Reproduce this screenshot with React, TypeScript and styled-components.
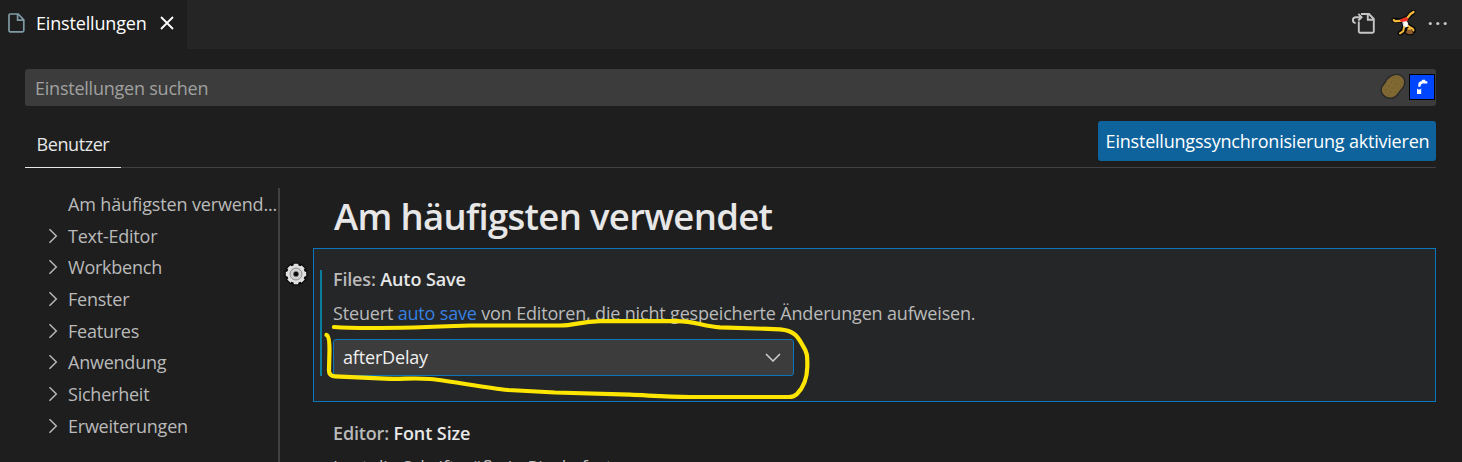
import React from "react";
import styled, { createGlobalStyle } from "styled-components";

const Global = createGlobalStyle`
  * { box-sizing: border-box; }
  body {
    margin: 0;
    overflow: hidden;
    background: #1e1e1e;
    color: #bababa;
    font: 400 18px/24px "Open Sans", "Noto Sans", sans-serif;
    letter-spacing: -0.17px;
    white-space: nowrap;
  }
`;

const Window = styled.div`
  position: relative;
  width: 1462px;
  height: 462px;
  overflow: hidden;
  background: #1e1e1e;
`;
const TabBar = styled.header`
  display: flex;
  justify-content: space-between;
  height: 49px;
  background: #252526;
`;
const Tab = styled.div`
  display: flex;
  align-items: center;
  width: 187px;
  padding: 0 0 3px 8px;
  background: #1e1e1e;
  color: #fff;
`;
const TabTitle = styled.span`
  width: 112px;
  margin: 0 12px 0 11px;
  letter-spacing: -0.16px;
`;
const Actions = styled.div`
  display: flex;
  align-items: flex-start;
  padding: 10px 15px 0 0;
`;
const ActionIcon = styled.svg<{ $gap?: number }>`
  flex: none;
  margin-left: ${(p) => p.$gap ?? 0}px;
`;
const SearchBox = styled.div`
  display: flex;
  align-items: center;
  justify-content: space-between;
  height: 37px;
  margin: 20px 26px 0 25px;
  padding: 0 1px 0 10px;
  border-radius: 3px;
  background: #3c3c3c;
  color: #a0a0a0;
`;
const SearchText = styled.span`
  padding-top: 1px;
  letter-spacing: -0.23px;
`;
const SearchIcons = styled.div`
  display: flex;
  align-items: center;
  gap: 3px;
  padding-bottom: 2px;
`;
const ScopeBar = styled.div`
  display: flex;
  justify-content: space-between;
  height: 62px;
  margin: 0 26px 0 25px;
  border-bottom: 1px solid #414141;
`;
const ScopeTab = styled.div`
  width: 96px;
  height: 62px;
  padding: 26px 0 0 11.5px;
  border-bottom: 1px solid #e7e7e7;
  color: #e7e7e7;
  letter-spacing: -0.42px;
`;
const SyncButton = styled.button`
  width: 338px;
  height: 40px;
  margin-top: 15px;
  padding: 0 0 0 1px;
  border: 0;
  border-radius: 3px;
  background: #0e639c;
  color: #fff;
  font: inherit;
  letter-spacing: -0.21px;
`;
const Body = styled.div`
  display: flex;
  margin-top: 20px;
`;
const Tree = styled.nav`
  width: 280px;
  height: 274px;
  border-right: 2px solid #414141;
`;
const TreeRow = styled.div`
  display: flex;
  align-items: center;
  height: 31.7px;
  padding-left: 48px;
`;
const Twistie = styled.span`
  display: flex;
  width: 20px;
`;
const TreeLabel = styled.span<{ $wide?: boolean }>`
  letter-spacing: ${(p) => (p.$wide ? -0.15 : -0.23)}px;
`;
const Content = styled.main`
  flex: 1;
  display: flex;
  flex-direction: column;
`;
const Heading = styled.h1`
  height: 60px;
  margin: 0;
  padding-left: 54px;
  color: #e7e7e7;
  font-size: 36.5px;
  font-weight: 600;
  line-height: 56px;
  letter-spacing: -0.68px;
`;
const SettingRow = styled.div`
  display: flex;
`;
const Gutter = styled.div`
  width: 33px;
  padding: 14px 0 0 4px;
`;
const FocusedSetting = styled.section`
  width: 1123px;
  height: 154px;
  padding: 21px 0 0 6px;
  border: 1px solid #0a76bd;
  background: #252628;
`;
const Modified = styled.div`
  height: 106px;
  padding-left: 11px;
  border-left: 2px solid #0c7d9d;
`;
const SettingTitle = styled.div`
  height: 31px;
  line-height: 18px;
  font-weight: 600;
`;
const SettingName = styled.span`
  color: #e7e7e7;
  letter-spacing: -0.08px;
`;
const Description = styled.p`
  height: 38px;
  margin: 0;
`;
const Link = styled.a`
  color: #3580e0;
`;
const Select = styled.div`
  display: flex;
  align-items: center;
  justify-content: space-between;
  width: 461px;
  height: 37px;
  padding: 0 12px 1px 9px;
  border: 1px solid #0a76bd;
  border-radius: 3px;
  background: #3c3c3c;
  color: #f0f0f0;
`;
const NextSetting = styled.section`
  padding: 22px 0 0 53px;
`;
const Marker = styled.svg`
  position: absolute;
  top: 0;
  left: 0;
  pointer-events: none;
`;

const categories = ["Text-Editor", "Workbench", "Fenster", "Features", "Anwendung", "Sicherheit", "Erweiterungen"];

const FileIcon = () => (
  <svg width="17" height="20" viewBox="0 0 17 20" fill="none" stroke="#7f9aa5" strokeWidth="1.7">
    <path d="M2.2 1H10.2L15.8 6.8V17.6Q15.8 18.8 14.6 18.8H2.2Q1 18.8 1 17.6V2.2Q1 1 2.2 1Z M9.6 1V7.2H15.8" />
  </svg>
);
const CloseIcon = () => (
  <svg width="14" height="14" viewBox="0 0 14 14" stroke="#fff" strokeWidth="1.8">
    <path d="M1 1L13 13M13 1L1 13" />
  </svg>
);
const OpenJsonIcon = () => (
  <ActionIcon width="24" height="26" viewBox="0 0 24 26" fill="none" stroke="#c5c5c5" strokeWidth="1.9">
    <path d="M10 4H18L22.8 9V21.6Q22.8 22.8 21.6 22.8H9Q7.8 22.8 7.8 21.6V11.5M16.8 4V9.8H22.8" />
    <path d="M4.6 13Q1.8 12.6 1.9 10Q2 7.2 5 7.2H10.6M7.3 3.9L10.6 7.2L7.3 10.5" />
  </ActionIcon>
);
const CartwheelIcon = () => (
  <ActionIcon $gap={16} width="28" height="28" viewBox="0 0 28 28" strokeLinecap="round" strokeLinejoin="round" fill="none">
    <path d="M3 10.2L10 10.5L15.5 8.3L22 2.2M13 12L14 17M13 18L12 21.5L9 23.2M17 16L22.3 19L22.3 21M16.5 20L20 21.5L20.5 22.7H17Z" stroke="#080808" strokeWidth="5" />
    <path d="M2.8 10L4 11.2L10 10.8M16 8.2L19.5 4L22.5 2" stroke="#f5ba3c" strokeWidth="2.3" />
    <path d="M9.5 9.8L15.2 7.4L17 9L15.6 11.3L10.5 11.5Z" fill="#ee3324" stroke="#ee3324" />
    <path d="M12.2 12.2L15.8 11.7L17.2 16L13.5 17.3Z" fill="#fff" stroke="#fff" />
    <path d="M13 17.5L12.2 21.2L9 23.4M17.3 16.2L21.8 18.8L22.5 20.5" stroke="#f5ba3c" strokeWidth="2" />
    <path d="M16.5 18L19.5 17.5L20.8 20.5L16.5 21Z" fill="#f5ba3c" />
    <path d="M15.8 20.5Q18.5 18.4 21 20.5L22.3 23.2Q19 25.2 15.5 23.3Q14.6 22 15.8 20.5Z" fill="#905c2d" />
  </ActionIcon>
);
const MoreIcon = () => (
  <ActionIcon $gap={8} width="20" height="28" viewBox="0 0 20 28" fill="#c5c5c5">
    <circle cx="3.3" cy="13.5" r="1.6" />
    <circle cx="10.8" cy="13.5" r="1.6" />
    <circle cx="18.2" cy="13.5" r="1.6" />
  </ActionIcon>
);
const PotatoIcon = () => (
  <svg width="26" height="27" viewBox="0 0 26 27">
    <path d="M11 3Q14.5 .8 18.5 1.6Q24.3 3.2 24.8 9Q24.7 13.5 21.5 16.5Q19.5 18.5 18 21Q15 25.4 10 25.3Q3.2 24.5 1.2 18.5Q.8 14 3.5 11.5Q5.2 9.8 6.2 7.2Q7.8 4.5 11 3Z" fill="#806833" stroke="#292929" strokeWidth="1.4" />
    <path d="M13 5h1M18 5h1M21 9h1M11 9h1M16 11h1M20 13h1M8 13h1M13 15h1M5 17h1M10 19h1M15 19h1M8 22h1" stroke="#665128" strokeWidth="1.2" />
  </svg>
);
const TapIcon = () => (
  <svg width="26" height="26" viewBox="0 0 26 26">
    <rect x=".5" y=".5" width="25" height="25" fill="#0046ff" stroke="#000" />
    <path d="M9.3 12.7V10.4Q9.5 7.4 12.4 7.2L13.2 5.8H16L16.6 7.2H18.3V9.6H13.5Q11.6 9.8 11.4 12.7Z M8 14.5L9.2 15.5H11.2L12.2 14.2V20H8Z" fill="#fff" />
  </svg>
);
const GearIcon = () => (
  <svg width="24" height="24" viewBox="0 0 24 24">
    <circle cx="12" cy="12" r="10.6" fill="#080808" />
    <g stroke="#080808" strokeWidth="7.2">
      <path d="M12 .5V23.5M.5 12H23.5M4 4L20 20M20 4L4 20" />
    </g>
    <g stroke="#e0e0e0" strokeWidth="4.6">
      <path d="M12 1.8V22.2M1.8 12H22.2M4.8 4.8L19.2 19.2M19.2 4.8L4.8 19.2" />
    </g>
    <circle cx="12" cy="12" r="9" fill="#e0e0e0" />
    <circle cx="12" cy="12" r="6" fill="#cfcfcf" stroke="#858585" strokeWidth=".9" />
    <circle cx="12" cy="12" r="2.6" fill="#050505" stroke="#777" strokeWidth=".6" />
  </svg>
);
const ChevronRight = () => (
  <svg width="10" height="16" viewBox="0 0 10 16" fill="none" stroke="#b8b8b8" strokeWidth="1.5">
    <path d="M1.5 1.2L8.3 8L1.5 14.8" />
  </svg>
);
const ChevronDown = () => (
  <svg width="16" height="9" viewBox="0 0 16 9" fill="none" stroke="#d0d0d0" strokeWidth="1.5">
    <path d="M1 1L8 8L15 1" />
  </svg>
);

export default function App() {
  return (
    <>
      <Global />
      <Window>
        <TabBar>
          <Tab>
            <FileIcon />
            <TabTitle>Einstellungen</TabTitle>
            <CloseIcon />
          </Tab>
          <Actions>
            <OpenJsonIcon />
            <CartwheelIcon />
            <MoreIcon />
          </Actions>
        </TabBar>
        <SearchBox>
          <SearchText>Einstellungen suchen</SearchText>
          <SearchIcons>
            <PotatoIcon />
            <TapIcon />
          </SearchIcons>
        </SearchBox>
        <ScopeBar>
          <ScopeTab>Benutzer</ScopeTab>
          <SyncButton>Einstellungssynchronisierung aktivieren</SyncButton>
        </ScopeBar>
        <Body>
          <Tree>
            <TreeRow>
              <Twistie />
              <TreeLabel $wide>Am häufigsten verwend...</TreeLabel>
            </TreeRow>
            {categories.map((name) => (
              <TreeRow key={name}>
                <Twistie>
                  <ChevronRight />
                </Twistie>
                <TreeLabel>{name}</TreeLabel>
              </TreeRow>
            ))}
          </Tree>
          <Content>
            <Heading>Am häufigsten verwendet</Heading>
            <SettingRow>
              <Gutter>
                <GearIcon />
              </Gutter>
              <FocusedSetting>
                <Modified>
                  <SettingTitle>
                    Files: <SettingName>Auto Save</SettingName>
                  </SettingTitle>
                  <Description>
                    Steuert <Link>auto save</Link> von Editoren, die nicht gespeicherte Änderungen aufweisen.
                  </Description>
                  <Select>
                    afterDelay
                    <ChevronDown />
                  </Select>
                </Modified>
              </FocusedSetting>
            </SettingRow>
            <NextSetting>
              <SettingTitle>
                Editor: <SettingName>Font Size</SettingName>
              </SettingTitle>
              <Description>Legt die Schriftgröße in Pixeln fest.</Description>
            </NextSetting>
          </Content>
        </Body>
        <Marker width="1462" height="462" fill="none" stroke="#ffe600" strokeWidth="4.2" strokeLinecap="round" strokeLinejoin="round">
          <path d="M334 327C360 329 420 327.5 470 325.5H560C575 325.5 580 321.5 600 321.2H676C695 321 702 326 720 327.3L780 329.3C796 330.5 799 339 803 346C807 352 807.5 355 807.3 367C807 381 801 390 797 394Q794 397 789 397H690C665 397 650 395.5 630 394.7L555 392.5L508 390C485 388 455 381.5 430 379C410 377.5 405 379.5 385 378.7L335 376.4Q328.7 376 329 370L329.5 350Q329.5 336 326.5 335" />
        </Marker>
      </Window>
    </>
  );
}
